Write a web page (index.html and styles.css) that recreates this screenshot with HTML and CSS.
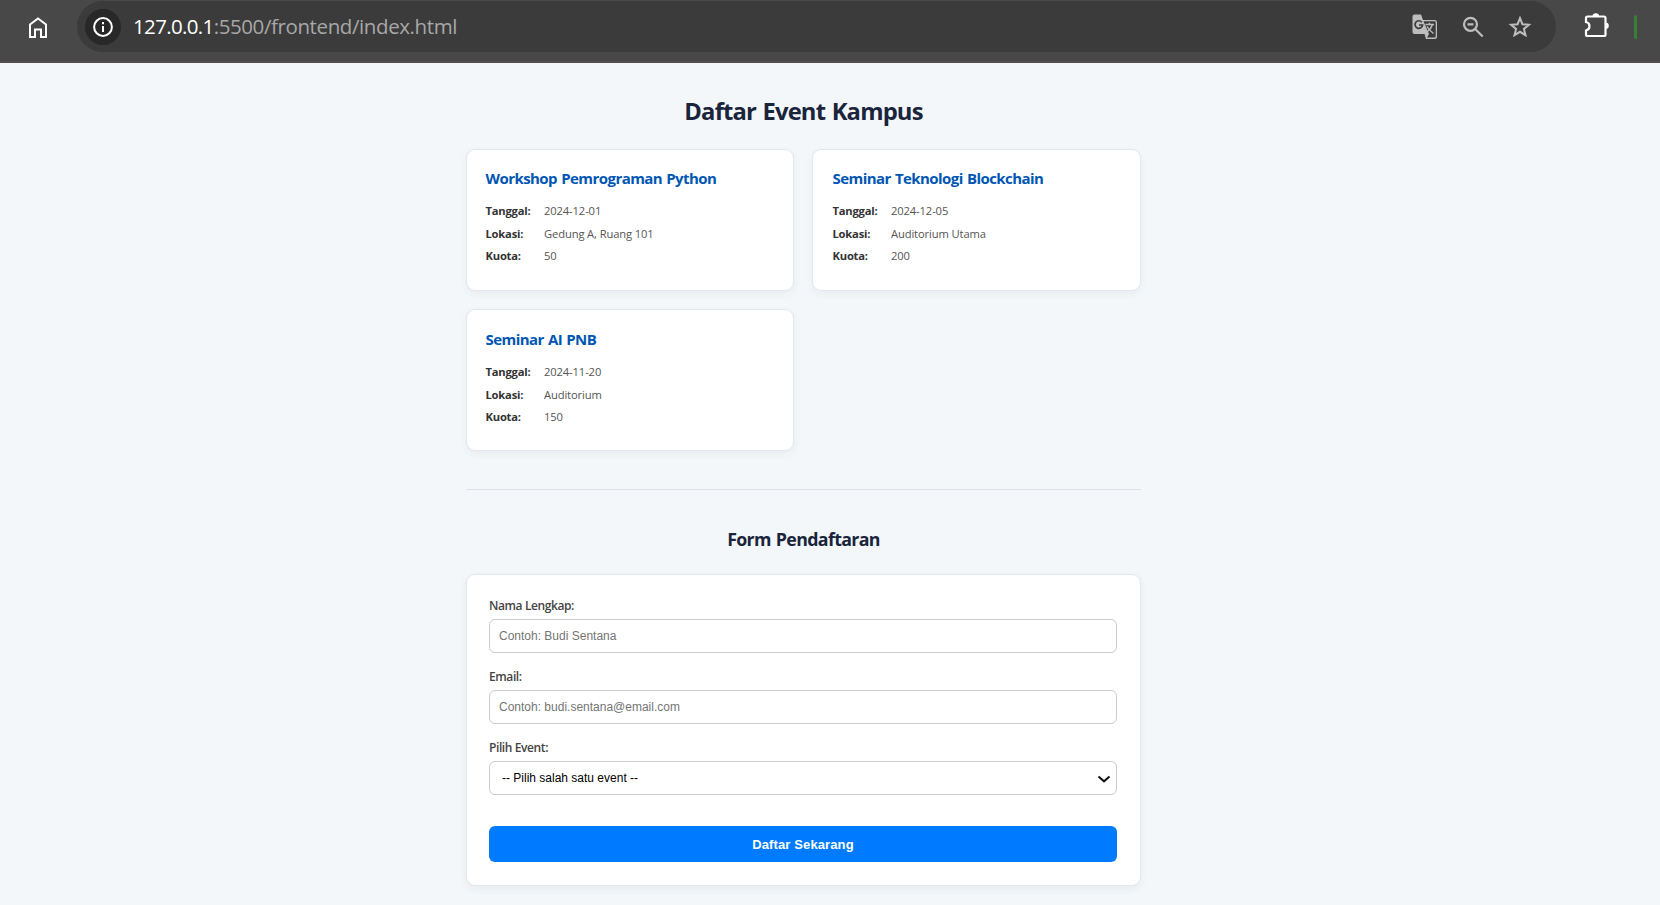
FILE: index.html
```html
<!DOCTYPE html>
<html lang="id">
<head>
<meta charset="utf-8">
<title>Daftar Event Kampus</title>
<link rel="stylesheet" href="styles.css">
</head>
<body>
<header class="browser">
  <svg class="home" width="26" height="26" viewBox="0 0 26 26" fill="none" stroke="#fff" stroke-width="2"><path d="M5 10.5 13 4.5 21 10.5V23H16V15.5H10V23H5Z"/></svg>
  <div class="address">
    <span class="info"><svg width="20" height="20" viewBox="0 0 20 20" fill="none" stroke="#fff" stroke-width="2"><circle cx="10" cy="10" r="8.9"/><path d="M10 9v6M10 5v2.2"/></svg></span>
    <span class="url"><span class="host">127.0.0.1</span><span class="path">:5500/frontend/index.html</span></span>
    <span class="tools">
      <svg width="26" height="26" viewBox="0 0 26 26"><path d="M2.5.5H9L11 6H22.500Q25 6 25 8.500V22.500Q25 25 22.500 25H14L12.500 20H2.500Q.5 20 .5 18V2.500Q.5.5 2.500.5Z" fill="#bdbdbd"/><path d="M11.500 7.300H22.300Q23.700 7.300 23.700 8.700V22.200Q23.700 23.600 22.300 23.600H15L17 20Z" fill="#3b3b3b"/><path d="M9.800 8.200A3.800 3.800 0 1 0 10.600 11H7" fill="none" stroke="#3b3b3b" stroke-width="1.700"/><path d="M13.500 10.500H22M17.500 8.700V10.500M20.500 10.500Q19 15 15.500 17.500M15 12.500Q17 16 21.500 19.500" fill="none" stroke="#bdbdbd" stroke-width="1.500"/></svg>
      <svg width="22" height="22" viewBox="0 0 22 22" fill="none" stroke="#bdbdbd" stroke-width="2.200"><circle cx="8.500" cy="8.300" r="6.500"/><path d="M13.200 13 20.700 20.500M5.500 8.300H11.500"/></svg>
      <svg width="24" height="24" viewBox="0 0 24 24" fill="none" stroke="#bdbdbd" stroke-width="2"><path d="M12 3.200 14.400 9.200 20.900 9.700 15.900 13.900 17.500 20.200 12 16.800 6.500 20.200 8.100 13.900 3.100 9.700 9.600 9.200Z"/></svg>
    </span>
  </div>
  <svg class="puzzle" width="26" height="26" viewBox="0 0 26 26"><path d="M3.500 4.500H20Q21.500 4.500 21.500 6V22.500Q21.500 24 20 24H3.500Q2 24 2 22.500V18.500Q5.500 17.800 5.500 14.300T2 10V6Q2 4.500 3.500 4.500Z" fill="none" stroke="#fff" stroke-width="2.200"/><path d="M8.500 4.500a3.300 3.300 0 0 1 6.600 0ZM21.500 10.500a3.300 3.300 0 0 1 0 6.600Z" fill="#fff"/></svg>
  <span class="marker"></span>
</header>
<main class="page">
  <h1 class="title">Daftar Event Kampus</h1>
  <section class="events">
    <article class="card">
      <h3 class="card-title">Workshop Pemrograman Python</h3>
      <p class="row"><strong>Tanggal:</strong><span>2024-12-01</span></p>
      <p class="row"><strong>Lokasi:</strong><span>Gedung A, Ruang 101</span></p>
      <p class="row"><strong>Kuota:</strong><span>50</span></p>
    </article>
    <article class="card card-right">
      <h3 class="card-title">Seminar Teknologi Blockchain</h3>
      <p class="row"><strong>Tanggal:</strong><span>2024-12-05</span></p>
      <p class="row"><strong>Lokasi:</strong><span>Auditorium Utama</span></p>
      <p class="row"><strong>Kuota:</strong><span>200</span></p>
    </article>
    <article class="card card-lower">
      <h3 class="card-title">Seminar AI PNB</h3>
      <p class="row"><strong>Tanggal:</strong><span>2024-11-20</span></p>
      <p class="row"><strong>Lokasi:</strong><span>Auditorium</span></p>
      <p class="row"><strong>Kuota:</strong><span>150</span></p>
    </article>
  </section>
  <hr class="divider">
  <h2 class="subtitle">Form Pendaftaran</h2>
  <form class="form">
    <label class="label" for="nama">Nama Lengkap:</label>
    <input class="field" id="nama" type="text" placeholder="Contoh: Budi Sentana">
    <label class="label" for="email">Email:</label>
    <input class="field" id="email" type="email" placeholder="Contoh: budi.sentana@email.com">
    <label class="label" for="event">Pilih Event:</label>
    <div class="select-wrap">
      <select class="field select" id="event"><option>-- Pilih salah satu event --</option></select>
      <svg class="chevron" width="14" height="9" viewBox="0 0 14 9" fill="none" stroke="#111" stroke-width="2"><path d="M1.500 1.500 7 6.300 12.500 1.500"/></svg>
    </div>
    <button class="submit" type="button">Daftar Sekarang</button>
  </form>
</main>
</body>
</html>
```
FILE: styles.css
```css
* { box-sizing: border-box; }
body { margin: 0; height: 905px; overflow: hidden; background: #f3f7fa; font-family: "Open Sans", "Noto Sans", sans-serif; color: #333; }
h1, h2, h3, p { margin: 0; }
svg { display: block; flex: none; }

.browser { display: flex; height: 63px; background: #484848; border-bottom: 2px solid #554f4f; padding: 1px 23px 0 25px; }
.home { margin-top: 13px; }
.address { display: flex; align-items: center; width: 1479px; height: 51px; margin-left: 26px; border-radius: 26px; background: #3b3b3b; padding: 0 24px 0 8px; }
.info { display: flex; align-items: center; justify-content: center; width: 36px; height: 36px; border-radius: 50%; background: #282828; }
.url { margin: -2px 0 0 12px; font-size: 20.5px; line-height: 28px; letter-spacing: -.47px; white-space: nowrap; }
.host { color: #fff; letter-spacing: -.65px; }
.path { color: #a8a8a8; letter-spacing: -.4px; }
.tools { display: flex; align-items: center; gap: 24px 24px; margin-left: auto; }
.puzzle { margin: 11px 0 0 28px; }
.marker { width: 3px; height: 24px; margin: 14px 0 0 auto; border-radius: 2px; background: #388038; }

.page { width: 675px; margin-left: 466px; padding-top: 30px; }
.title { font-size: 23.8px; line-height: 36px; font-weight: 700; letter-spacing: -.85px; word-spacing: 1.2px; text-align: center; color: #1a253c; }
.events { display: grid; grid-template-columns: 327.500px 329px; gap: 18px 18.500px; margin-top: 20px; }
.card { height: 142px; padding: 17px 18px 0 18.500px; background: #fff; border: 1px solid #e1e7ee; border-radius: 9px; box-shadow: 0 3px 9px rgba(30, 50, 70, .05); }
.card-right { margin-left: -.5px; padding-left: 20px; }
.card-lower { padding-top: 18px; }
.card-title { height: 34px; font-size: 15px; line-height: 22px; font-weight: 700; letter-spacing: -.56px; word-spacing: .8px; color: #0056b3; white-space: nowrap; }
.row { display: flex; height: 22.6px; font-size: 11.2px; line-height: 20px; letter-spacing: -.12px; color: #555; }
.row strong { width: 58.500px; color: #333; font-weight: 700; letter-spacing: -.2px; }

.divider { height: 1px; margin: 38px 0 0; border: 0; background: #dde3e8; }
.subtitle { margin-top: 35px; font-size: 17.8px; line-height: 28px; font-weight: 700; letter-spacing: -.65px; word-spacing: 1px; text-align: center; color: #1a253c; }
.form { display: flex; flex-direction: column; height: 312px; margin-top: 21px; padding: 22px 23px 0 22px; background: #fff; border: 1px solid #e1e7ee; border-radius: 9px; box-shadow: 0 3px 9px rgba(30, 50, 70, .06); }
.label { height: 22px; font-size: 12px; line-height: 18px; font-weight: 600; letter-spacing: -.4px; color: #444; }
.field { display: block; width: 100%; height: 34px; margin: 0 0 15px; padding: 0 9px; border: 1px solid #ccc; border-radius: 6px; background: #fff; font: 12px "Liberation Sans", Arial, sans-serif; color: #000; }
.field::placeholder { color: #757575; opacity: 1; }
.select-wrap { position: relative; }
.select { appearance: none; margin-bottom: 31px; padding: 0 12px; }
.chevron { position: absolute; right: 6px; top: 13.500px; }
.submit { height: 36px; padding: 0; border: 0; border-radius: 6px; background: #007bff; color: #fff; font: 700 13px "Liberation Sans", Arial, sans-serif; letter-spacing: .12px; }
```
